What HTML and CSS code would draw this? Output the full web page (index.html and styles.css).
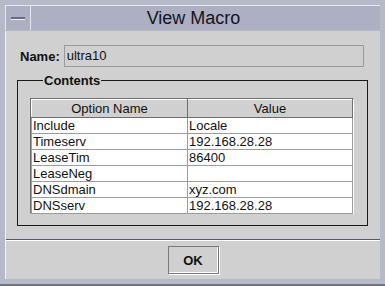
FILE: index.html
```html
<!DOCTYPE html>
<html>
<head>
<meta charset="utf-8">
<link rel="stylesheet" href="styles.css">
</head>
<body>
<div class="frame">
  <div class="titlebar">
    <div class="menubtn"><span class="dash"></span></div>
    <div class="title">View Macro</div>
  </div>
  <div class="client">
    <div class="namerow">
      <span class="label">Name:</span>
      <div class="field">ultra10</div>
    </div>
    <fieldset class="group">
      <legend>Contents</legend>
      <div class="viewport">
        <table class="grid">
          <thead>
            <tr><th class="c1">Option Name</th><th class="c2">Value</th></tr>
          </thead>
          <tbody>
            <tr><td>Include</td><td>Locale</td></tr>
            <tr><td>Timeserv</td><td>192.168.28.28</td></tr>
            <tr><td>LeaseTim</td><td>86400</td></tr>
            <tr><td>LeaseNeg</td><td></td></tr>
            <tr><td>DNSdmain</td><td>xyz.com</td></tr>
            <tr><td>DNSserv</td><td>192.168.28.28</td></tr>
          </tbody>
        </table>
      </div>
    </fieldset>
    <div class="separator"></div>
    <div class="buttons">
      <button class="ok">OK</button>
    </div>
  </div>
</div>
</body>
</html>
```

FILE: styles.css
```css
html, body {
  margin: 0;
  padding: 0;
  background: #b6b9c8;
}
.frame {
  width: 385px;
  height: 286px;
  box-sizing: border-box;
  background: #b6b9c8;
  padding: 5px 5px 5px 5px;
  border-bottom: 2px solid #6c6f86;
  display: flex;
  flex-direction: column;
  font-family: "Liberation Sans", Arial, sans-serif;
}
.titlebar {
  height: 24px;
  display: flex;
  border-top: 1px solid #e6e8f0;
  border-left: 1px solid #e6e8f0;
  background: #adb0c3;
  flex: none;
}
.menubtn {
  width: 24px;
  border-right: 1px solid #e6e8f0;
  display: flex;
  align-items: center;
  justify-content: center;
}
.dash {
  width: 14px;
  height: 2px;
  background: #6a6d80;
  border-bottom: 1px solid #f0f0f4;
}
.title {
  flex: 1;
  text-align: center;
  font-size: 18px;
  line-height: 24px;
  color: #141420;
  padding-right: 24px;
}
.client {
  flex: 1;
  background: #d0d0d0;
  border-left: 1px solid #f2f2f2;
  display: flex;
  flex-direction: column;
  margin-top: 1px;
}
.namerow {
  display: flex;
  align-items: center;
  margin: 14px 16px 0 14px;
  gap: 4px;
}
.label {
  font-weight: bold;
  font-size: 13px;
  color: #111;
}
.field {
  flex: 1;
  height: 20px;
  border: 1px solid #9a9a9a;
  font-size: 13px;
  line-height: 20px;
  padding-left: 2px;
  color: #111;
}
.group {
  margin: 6px 12px 0 11px;
  padding: 10px 13px 11px 12px;
  border: 1px solid #1a1a1a;
  min-width: 0;
}
.group legend {
  font-weight: bold;
  font-size: 13px;
  line-height: 15px;
  padding: 0 1px;
  margin-left: 13px;
  color: #111;
}
.viewport {
  height: 116px;
  border-left: 1px solid #6e6e6e;
  border-top: 1px solid #6e6e6e;
  border-bottom: 1px solid #ffffff;
  border-right: 1px solid #ffffff;
  box-sizing: border-box;
  background: #d0d0d0;
}
.grid {
  width: 100%;
  border-collapse: collapse;
  font-size: 13px;
  color: #111;
  table-layout: fixed;
}
.grid th {
  font-weight: normal;
  height: 17px;
  padding: 0;
  background: #d0d0d0;
  border-top: 1px solid #ffffff;
  border-left: 1px solid #ffffff;
  border-right: 1px solid #6e6e6e;
  border-bottom: 1px solid #6e6e6e;
  line-height: 16px;
  text-align: center;
}
.grid .c1 { width: 155px; }
.grid td {
  background: #ffffff;
  border: 1px solid #9c9c9c;
  height: 15px;
  line-height: 15px;
  padding: 0 0 0 1px;
  white-space: nowrap;
}
.separator {
  margin-top: 13px;
  height: 1px;
  background: #55586a;
  border-bottom: 1px solid #ffffff;
}
.buttons {
  flex: 1;
  display: flex;
  justify-content: center;
  align-items: center;
}
.ok {
  width: 51px;
  height: 28px;
  background: #d0d0d0;
  border: 1px solid #7a7a7a;
  box-shadow: inset -1px -1px 0 #ffffff, 1px 1px 0 #ffffff;
  font-family: "Liberation Sans", Arial, sans-serif;
  font-weight: bold;
  font-size: 13px;
  color: #111;
  padding: 0;
}
```
